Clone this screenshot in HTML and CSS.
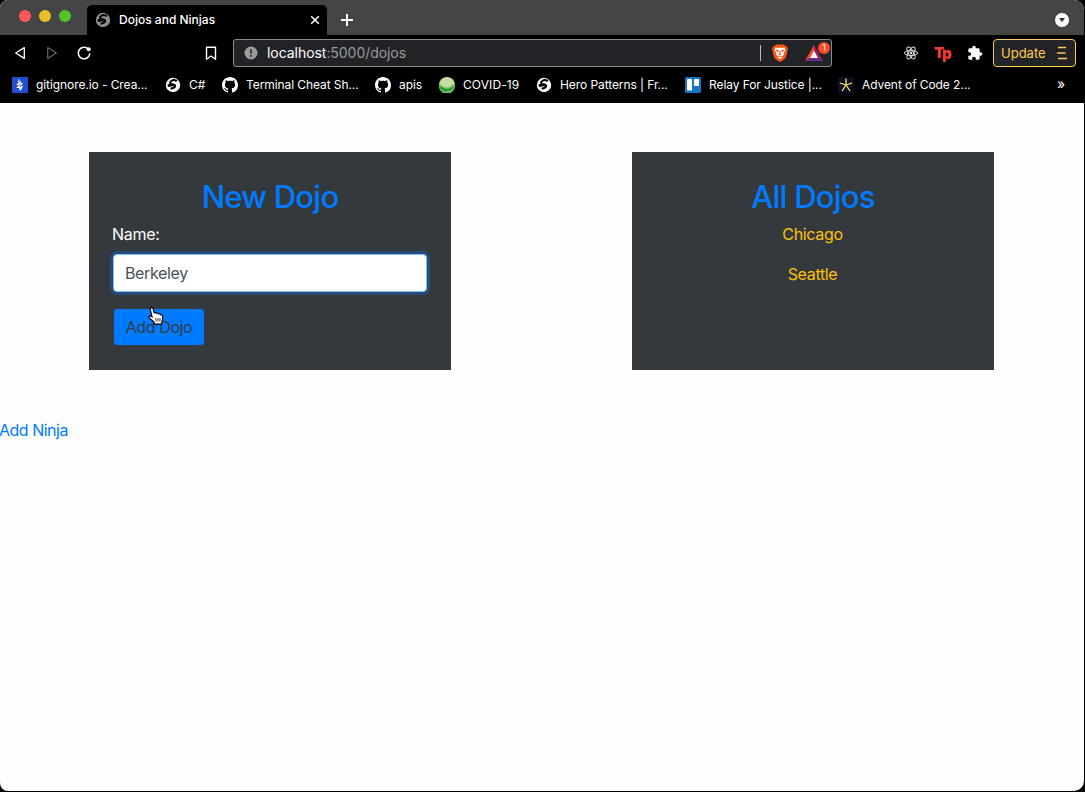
FILE: index.html
```html
<!DOCTYPE html>
<html lang="en">
<head>
<meta charset="utf-8">
<title>Dojos and Ninjas</title>
<link rel="stylesheet" href="styles.css">
</head>
<body>
<svg class="defs" aria-hidden="true">
  <symbol id="globe" viewBox="0 0 16 16">
    <circle cx="8" cy="8" r="7.200" fill="currentColor"/>
    <path d="M10.400 2.700C8 2.800 4.800 4 5 6c.2 1.800 4.800.8 5.200 2.600.3 1.600-2.200 3-4.600 2.900" fill="none" stroke="#000" stroke-width="2"/>
    <path d="M2.400 7.600l3.400-1 3.800 1.300-.7 1.500-2.500-.2-1.900.8-1.600-.3zM9.300 3l2.200-.4 1 1.300-2.200 1.200z" fill="#000"/>
  </symbol>
  <symbol id="github" viewBox="0 0 16 16">
    <path fill="#fff" d="M8 0C3.580 0 0 3.580 0 8c0 3.540 2.290 6.530 5.470 7.590.4.070.55-.17.55-.38 0-.19-.01-.82-.01-1.490-2.010.37-2.530-.49-2.690-.94-.09-.23-.48-.94-.82-1.130-.28-.15-.68-.52-.01-.53.63-.01 1.080.58 1.230.82.72 1.210 1.870.87 2.330.66.07-.52.28-.87.51-1.070-1.780-.2-3.640-.89-3.640-3.950 0-.87.31-1.590.82-2.150-.08-.2-.36-1.020.08-2.120 0 0 .67-.21 2.200.82.64-.18 1.320-.27 2-.27s1.360.09 2 .27c1.530-1.040 2.200-.82 2.200-.82.44 1.100.16 1.920.08 2.120.51.56.82 1.270.82 2.150 0 3.070-1.870 3.750-3.650 3.950.29.25.54.73.54 1.480 0 1.070-.01 1.930-.01 2.200 0 .21.15.46.55.38A8.010 8.010 0 0 0 16 8c0-4.420-3.580-8-8-8z"/>
  </symbol>
</svg>
<div class="window">
  <div class="tabstrip">
    <div class="lights"><i class="light red"></i><i class="light yellow"></i><i class="light green"></i></div>
    <div class="tab">
      <svg class="icon tab-icon"><use href="#globe"/></svg>
      <span class="tab-title">Dojos and Ninjas</span>
      <svg class="close" viewBox="0 0 10 10"><path d="M1.200 1.200l7.600 7.600M8.800 1.200L1.200 8.800" stroke="#fff" stroke-width="1.500"/></svg>
    </div>
    <svg class="plus" viewBox="0 0 12 12"><path d="M6 0v12M0 6h12" stroke="#fff" stroke-width="2"/></svg>
    <svg class="tab-menu" viewBox="0 0 14 14"><circle cx="7" cy="7" r="7" fill="#fff"/><path d="M4 5h6L7 9.300z" fill="#333"/></svg>
  </div>
  <div class="toolbar">
    <svg class="icon" viewBox="0 0 16 16"><path d="M12.300 2.600v10.800L3.700 8z" fill="none" stroke="#fff" stroke-width="1.300" stroke-linejoin="round"/></svg>
    <svg class="icon" viewBox="0 0 16 16"><path d="M3.700 2.600v10.800L12.300 8z" fill="none" stroke="#666" stroke-width="1.200" stroke-linejoin="round"/></svg>
    <svg class="icon" viewBox="0 0 16 16"><path d="M12.300 4A5.800 5.800 0 1 0 13.800 8.900" fill="none" stroke="#fff" stroke-width="1.500" stroke-linecap="round"/><circle cx="12.700" cy="4.300" r="2" fill="#fff"/></svg>
    <svg class="icon bookmark-icon" viewBox="0 0 16 16"><path d="M3.500 2.200h9v12L8 11l-4.500 3.200z" fill="none" stroke="#fff" stroke-width="1.400" stroke-linejoin="round"/></svg>
    <div class="address">
      <svg class="info" viewBox="0 0 14 14"><circle cx="7" cy="7" r="6.500" fill="#9a9b9d"/><path d="M7 3.200v4.500M7 9v1.800" stroke="#222326" stroke-width="1.600"/></svg>
      <span class="url"><b>localhost</b>:5000/dojos</span>
      <i class="divider"></i>
      <svg class="brave" viewBox="0 0 16 18"><path d="M4 .5h8l1.500 1.700 1.800.2.500 3L14 13.200 12 15.600 8 18l-4-2.400-2-2.400L.2 5.400l.5-3 1.800-.2z" fill="#fb5413"/><path d="M3.700 3.500l2.600.5 1.700-.4 1.700.4 2.600-.5 1.300 2.700-2 3 .2 1.800-2 1.300.8 1L8 15l-2.600-1.700.8-1-2-1.300.2-1.800-2-3z" fill="#fff"/><path d="M4 6l2.700.7-.9 1.200zM12 6l-2.700.7.9 1.200zM8 7v3.500l-1.500.6M8 10.500l1.500.6M6.300 12.500h3.400" fill="#fb5413" stroke="#fb5413" stroke-width=".8"/></svg>
      <span class="rewards">
        <svg class="bat" viewBox="0 0 18 16"><path d="M9 0v6L5 13l-5 3z" fill="#ff4724"/><path d="M9 0l9 16-5-3-4-7z" fill="#9e1f63"/><path d="M0 16l5-3h8l5 3z" fill="#662d91"/><path d="M9 5.500l4 7.500H5z" fill="#fff"/></svg>
        <span class="badge">1</span>
      </span>
    </div>
    <svg class="icon react" viewBox="0 0 16 16"><g fill="none" stroke="#ddd" stroke-width="1"><ellipse cx="8" cy="8" rx="6.600" ry="2.600"/><ellipse cx="8" cy="8" rx="6.600" ry="2.600" transform="rotate(60 8 8)"/><ellipse cx="8" cy="8" rx="6.600" ry="2.600" transform="rotate(120 8 8)"/></g><circle cx="8" cy="8" r="1.400" fill="#ddd"/></svg>
    <span class="tp">T<span class="tp-small">p</span></span>
    <svg class="icon" viewBox="0 0 24 24"><path fill="#fff" d="M20.500 11H19V7c0-1.100-.9-2-2-2h-4V3.500C13 2.120 11.880 1 10.500 1S8 2.120 8 3.500V5H4c-1.100 0-1.990.9-1.990 2v3.800H3.500c1.490 0 2.700 1.210 2.700 2.700s-1.210 2.700-2.700 2.700H2V20c0 1.100.9 2 2 2h3.800v-1.500c0-1.490 1.210-2.700 2.700-2.700 1.490 0 2.700 1.210 2.700 2.700V22H17c1.100 0 2-.9 2-2v-4h1.500c1.380 0 2.500-1.120 2.500-2.500S21.880 11 20.500 11z"/></svg>
    <div class="update"><span>Update</span><svg class="burger" viewBox="0 0 10 14"><path d="M1 1.500h8M0 7h8.500M1 12.500h9" stroke="#fdca53" stroke-width="1.300"/></svg></div>
  </div>
  <div class="bookmarks">
    <div class="bookmark"><svg class="icon" viewBox="0 0 16 16"><path fill="#204ecf" d="M0 0h16v16H0z"/><path d="M6.800 2.500v3.200l3.200 1.300-4.500 3.300 4.200.4-1.700 2.800M9.300 4.500L5.300 7.500l5 1.800L7.200 12.500" fill="none" stroke="#fff" stroke-width="1.100"/></svg><span>gitignore.io - Crea...</span></div>
    <div class="bookmark"><svg class="icon"><use href="#globe"/></svg><span>C#</span></div>
    <div class="bookmark"><svg class="icon"><use href="#github"/></svg><span>Terminal Cheat Sh...</span></div>
    <div class="bookmark"><svg class="icon"><use href="#github"/></svg><span>apis</span></div>
    <div class="bookmark"><svg class="icon" viewBox="0 0 16 16"><circle cx="8" cy="8" r="8" fill="#c5dfa0"/><path d="M0 7c2.500 0 3.500 3 7 3.500 3 .3 6-.8 8.300-4.500A8 8 0 1 1 0 7z" fill="#6fbd5a"/><path d="M.6 10.500c3.400-1 5.400 1.800 8 1.500 2.500 0 4.400-1.500 6.400-3A8 8 0 0 1 .6 10.500z" fill="#2b9633"/></svg><span class="covid">COVID-19</span></div>
    <div class="bookmark"><svg class="icon"><use href="#globe"/></svg><span>Hero Patterns | Fr...</span></div>
    <div class="bookmark"><svg class="icon" viewBox="0 0 16 16"><rect width="16" height="16" rx="1.500" fill="#1776c4"/><rect x="2" y="2" width="5" height="11.500" rx="1" fill="#fff"/><rect x="9" y="2" width="5" height="7" rx="1" fill="#fff"/></svg><span>Relay For Justice |...</span></div>
    <div class="bookmark"><svg class="icon" viewBox="0 0 16 16"><path fill="#0f0f23" d="M0 0h16v16H0z"/><path d="M8 8V1.500M8 8L1.800 6M8 8l6.200-2M8 8l-4 6M8 8l4 6" stroke="#f5ed5a" stroke-width="1.300"/></svg><span>Advent of Code 2...</span></div>
    <span class="more">»</span>
  </div>
  <main class="page">
    <div class="panels">
      <section class="panel">
        <h2 class="heading">New Dojo</h2>
        <form>
          <label class="label" for="name">Name:</label>
          <input class="field" id="name" type="text" value="Berkeley">
          <div class="action">
            <button class="submit" type="button">Add Dojo</button>
            <svg class="pointer" viewBox="0 0 16 18"><path d="M2.500 1.200C3.300.2 4.700.5 5 1.700l1.200 4.100c.7-.5 1.700-.3 2 .5.700-.6 1.900-.3 2.200.6.700-.5 1.800-.1 2 .8.800-.3 1.700.2 1.900 1.100.5 2 .3 4-.3 5.600l-.4 2.700H6.800L5.600 14.500 1.300 11C.5 9.900 1.300 8.600 2.500 9l1.600.9L2.400 3c-.2-.7-.3-1.300.1-1.800z" fill="#fff" stroke="#000" stroke-width="1.100"/><path d="M7.800 11l.2 3.500M9.900 11l.2 3.500M12 11v3.500" stroke="#000" stroke-width=".8"/></svg>
          </div>
        </form>
      </section>
      <section class="panel">
        <h2 class="heading">All Dojos</h2>
        <p class="dojo">Chicago</p>
        <p class="dojo">Seattle</p>
      </section>
    </div>
    <a class="ninja">Add Ninja</a>
  </main>
</div>
</body>
</html>
```

FILE: styles.css
```css
* { box-sizing: border-box; }
body { margin: 0; background: #000; font-family: Inter, "Liberation Sans", sans-serif; overflow: hidden; }
.defs { position: absolute; width: 0; height: 0; }
.window { width: 1084px; height: 791px; display: flex; flex-direction: column; background: #fefefe; border-radius: 8px 10px 10px 8px; overflow: hidden; }
.icon { width: 16px; height: 16px; flex: none; }

.tabstrip { height: 35px; flex: none; background: #454545; display: flex; align-items: flex-start; padding-left: 19px; }
.lights { display: flex; gap: 8px; padding-top: 10px; width: 68px; }
.light { width: 12px; height: 12px; border-radius: 50%; }
.red { background: #ff5a52; }
.yellow { background: #e6c02a; }
.green { background: #53c22b; }
.tab { width: 240px; height: 30px; margin-top: 5px; background: #000; border-radius: 5px 5px 0 0; display: flex; align-items: center; padding: 0 7px 0 8px; }
.tab-icon { color: #8a8d91; }
.tab-title { flex: 1; margin-left: 8px; padding-bottom: 2px; color: #fff; font-size: 12px; font-weight: 500; white-space: nowrap; }
.close { width: 10px; height: 10px; }
.plus { width: 12px; height: 12px; margin: 14px 0 0 14px; }
.tab-menu { width: 14px; height: 14px; margin: 13px 15px 0 auto; }

.toolbar { height: 36px; flex: none; background: #000; display: flex; align-items: center; gap: 16px; padding: 0 8px 0 12px; }
.bookmark-icon { margin-left: 95px; }
.address { width: 599px; height: 28px; margin-left: -2px; border: 1px solid #8c8c8c; border-radius: 3px; background: #222326; display: flex; align-items: center; padding: 0 0 0 10px; flex: none; }
.info { width: 14px; height: 14px; }
.url { flex: 1; margin-left: 9px; padding-bottom: 1px; color: #9a9b9d; font-size: 14px; letter-spacing: -0.050px; }
.url b { color: #fff; font-weight: 400; }
.divider { width: 1px; height: 16px; background: #bbb; }
.brave { width: 16px; height: 18px; margin-left: 11px; }
.rewards { position: relative; display: flex; width: 26px; margin-left: 17px; }
.bat { width: 18px; height: 16px; }
.badge { position: absolute; left: 13px; top: -3px; width: 12px; height: 12px; border-radius: 50%; background: #fb4b2b; color: #fff; font-size: 9px; line-height: 12px; text-align: center; }
.react { margin-left: 55px; }
.tp { width: 17px; margin: 0 0 0 -1px; color: #ee3b35; font: 900 15px/16px Inter, sans-serif; letter-spacing: -1.500px; white-space: nowrap; flex: none; }
.tp-small { position: relative; top: 1px; }
.update { width: 83px; height: 28px; flex: none; margin-left: -6px; border: 1px solid #fdca53; border-radius: 4px; background: #222326; color: #fdca53; font-size: 13px; display: flex; align-items: center; justify-content: space-between; padding: 0 8px 0 7px; }
.burger { width: 10px; height: 14px; }

.bookmarks { height: 32px; flex: none; background: #000; color: #fff; font-size: 12px; letter-spacing: -0.080px; display: grid; grid-template-columns: 153px 57px 153px 64px 97px 149px 153px 1fr auto; align-items: center; padding: 0 19px 4px 12px; }
.bookmark { display: flex; align-items: center; gap: 8px; white-space: nowrap; }
.bookmark span { padding-bottom: 2px; }
.bookmark .covid { letter-spacing: 0.100px; }
.more { font-size: 14px; padding-bottom: 3px; }

.page { flex: 1; padding-top: 49px; }
.panels { display: flex; gap: 181px; padding-left: 89px; }
.panel { width: 362px; height: 218px; padding: 24px; background: #34393d; color: #fff; }
.heading { margin: 0 0 6px; padding-top: 2px; color: #007bff; font-size: 31px; font-weight: 500; line-height: 38px; text-align: center; letter-spacing: -0.750px; }
.label { display: block; margin: 0 0 8px -1px; font-size: 16px; line-height: 24px; letter-spacing: -0.300px; }
.field { display: block; width: 314px; height: 38px; padding: 6px 11px; border: 1px solid #80bdff; border-radius: 4px; outline: none; box-shadow: 0 0 0 3px #294a77; background: #fff; color: #495057; font: 16px/24px Inter, sans-serif; letter-spacing: -0.350px; }
.action { position: relative; margin-top: 16px; }
.submit { height: 38px; width: 92px; padding: 0; border: 1px solid #34393d; border-radius: 4px; background: #007bff; color: #343a40; font: 16px/24px Inter, sans-serif; letter-spacing: -0.400px; white-space: nowrap; }
.pointer { position: absolute; left: 35px; top: -1px; width: 16px; height: 18px; }
.dojo { margin: 0 0 16px; padding-right: 1px; color: #ffc107; font-size: 16px; line-height: 24px; letter-spacing: -0.350px; text-align: center; }
.ninja { display: block; margin: 48px 0 0 -1px; color: #007bff; font-size: 16px; line-height: 24px; letter-spacing: -0.500px; }
```
